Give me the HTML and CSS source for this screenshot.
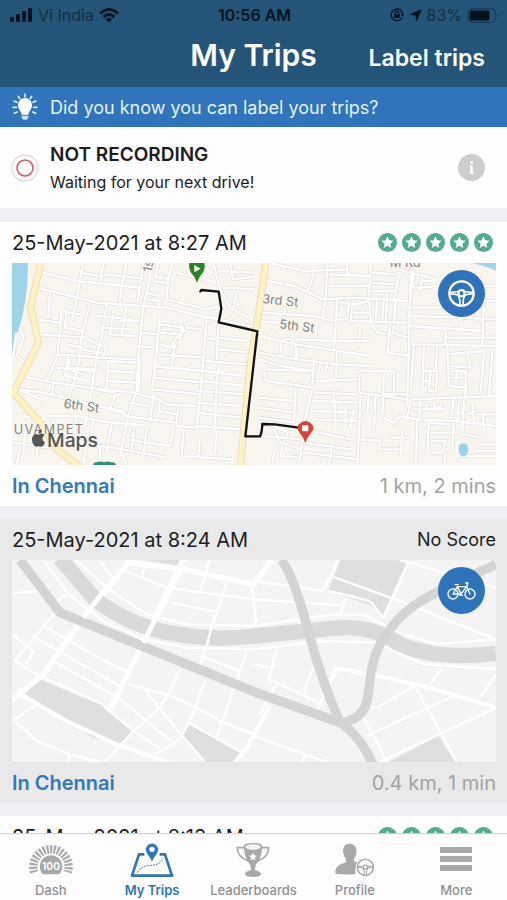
FILE: index.html
```html
<!DOCTYPE html>
<html lang="en">
<head>
<meta charset="utf-8">
<meta name="viewport" content="width=device-width, initial-scale=1">
<title>My Trips</title>
<link rel="stylesheet" href="styles.css">
</head>
<body>
<svg class="defs" aria-hidden="true">
  <symbol id="star" viewBox="0 0 20 20">
    <circle cx="10" cy="10" r="10" fill="#55ab91"/>
    <path d="M10 3.6l1.9 4.1 4.5.5-3.3 3.1.9 4.4-4-2.2-4 2.2.9-4.4-3.3-3.1 4.5-.5z" fill="#fff"/>
  </symbol>
  <symbol id="wheel" viewBox="0 0 80 80">
    <circle cx="40" cy="40" r="36" fill="none" stroke="currentColor" stroke-width="7"/>
    <path d="M6 37Q22 36 31 34M74 37Q58 36 49 34M34 46Q20 40 6 41M46 46Q60 40 74 41M35 74V60Q34 52 30 46M45 74V60Q46 52 50 46" fill="none" stroke="currentColor" stroke-width="5"/>
    <circle cx="40" cy="39" r="9" fill="none" stroke="currentColor" stroke-width="6"/>
  </symbol>
</svg>

<div class="app">
  <header class="top">
    <div class="status">
      <div class="status-left">
        <svg width="23" height="14" viewBox="0 0 23 14" aria-hidden="true"><rect y="9" width="4" height="5" rx="1"/><rect x="6" y="6" width="4" height="8" rx="1"/><rect x="12" y="3" width="4" height="11" rx="1"/><rect x="18" width="4" height="14" rx="1"/></svg>
        <span class="carrier">Vi India</span>
        <svg width="20" height="15" viewBox="0 0 20 15" aria-hidden="true"><g fill="none" stroke="#07131c" stroke-width="2.8"><path d="M1.2 5.4Q10-2.6 18.800 5.400"/><path d="M4.600 8.900Q10 4 15.400 8.900"/></g><path d="M6.800 11.200Q10 8.600 13.200 11.200L10 14.600Z"/></svg>
      </div>
      <span class="clock">10:56 AM</span>
      <div class="status-right">
        <svg width="14" height="14" viewBox="0 0 14 14" aria-hidden="true"><g fill="none" stroke="#07131c" stroke-width="1.300"><path d="M12.200 9.500A5.800 5.800 0 1 1 12.600 5.200"/><path d="M5.300 6.500V5a1.700 1.700 0 0 1 3.400 0v1.500"/></g><rect x="4.300" y="6.200" width="5.400" height="3.800" rx=".6"/><path d="M10.700 5.700h3.300l-1.400 3z"/></svg>
        <svg width="13" height="13" viewBox="0 0 13 13" aria-hidden="true"><path d="M13 0L7.500 13 6.400 6.700 0 5.600Z"/></svg>
        <span class="charge">83%</span>
        <svg width="32" height="15" viewBox="0 0 32 15" aria-hidden="true"><rect x=".7" y=".7" width="27.600" height="13.600" rx="4" fill="none" stroke="#173d57" stroke-width="1.400"/><rect x="2.500" y="2.500" width="20" height="10" rx="2"/><path d="M30 5v5q2-2.500 0-5z" fill="#173d57"/></svg>
      </div>
    </div>
    <div class="nav">
      <h1>My Trips</h1>
      <button class="label-trips" type="button">Label trips</button>
    </div>
  </header>

  <aside class="tip">
    <svg width="26" height="28" viewBox="0 0 78 84" aria-hidden="true">
      <g stroke="#dff2fa" stroke-width="5" stroke-linecap="round"><path d="M39 3v8M19 10l4 7M59 10l-4 7M6 24l9 4M72 24l-9 4M3 43h10M65 43h10M7 61l9-4M71 61l-9-4"/></g>
      <path d="M39 15a21 21 0 0 0-21 21c0 14 10 18 11 29h20c1-11 11-15 11-29a21 21 0 0 0-21-21z" fill="#fff"/>
      <path d="M29 68h20v6q-3 6-6 6h-8q-3 0-6-6z" fill="#c7e6f5"/>
    </svg>
    <span>Did you know you can label your trips?</span>
  </aside>

  <section class="recording">
    <svg width="28" height="28" viewBox="0 0 28 28" aria-hidden="true"><circle cx="14" cy="14" r="13" fill="#fff" stroke="#dcdce4" stroke-width="1.300"/><circle cx="14" cy="14" r="8" fill="none" stroke="#e2585c" stroke-width="1.600"/></svg>
    <div class="recording-text">
      <h2>NOT RECORDING</h2>
      <p>Waiting for your next drive!</p>
    </div>
    <button class="info" type="button" aria-label="Information"><svg width="27" height="27" viewBox="0 0 27 27" aria-hidden="true"><circle cx="13.500" cy="13.500" r="13.500" fill="#cdcdd0"/><circle cx="13.500" cy="8.500" r="1.500" fill="#fff"/><path d="M11.500 11.500h3.300v7h1v1.300h-4.600v-1.300h1v-5.700h-.7z" fill="#fff"/></svg></button>
  </section>

  <main class="trips">
    <article class="trip">
      <div class="trip-head">
        <h2>25-May-2021 at 8:27 AM</h2>
        <div class="stars" role="img" aria-label="5 stars"><svg><use href="#star"/></svg><svg><use href="#star"/></svg><svg><use href="#star"/></svg><svg><use href="#star"/></svg><svg><use href="#star"/></svg></div>
      </div>
      <div class="map">
        <svg class="map-art" viewBox="36 21 1452 606" role="img" aria-label="Route map">
          <defs>
            <g id="streets" fill="none" stroke-linejoin="round">
              <path d="M128 50L232 75 370 90M250 21L242 60 232 125M310 21L300 85M240 50L310 62M380 21L365 90 358 150M318 55L430 68M370 90L425 95M430 21L412 140M122 98L232 125 290 140 430 150 500 155 600 180 762 212M150 110L145 180M232 125L215 195M270 140L245 240 235 330 215 400M185 165L240 175M185 165L172 300 140 375M110 190L180 200M118 235L260 245M200 160L195 215 250 225M200 265L250 275M175 295L300 305 410 310M320 145L305 240 290 300 275 400 255 510M290 180L400 190M300 215L390 220M340 165L330 235 410 240M380 150L365 240M360 195L420 195M430 150L415 300 410 400 385 480 360 600M260 250L320 275 310 300M245 280L300 290M205 295L195 360M170 335L280 345M210 310L205 335 280 340M195 360L265 375M215 345L250 355"/>
              <path d="M320 315L410 320M325 345L415 350M325 375L410 380M325 315L320 400M60 360L160 380 270 395 400 410M160 380L155 420M190 395L180 420M215 400L205 425M50 400L130 410 290 450 370 465M130 410L55 400 125 430M290 400L345 410M345 415L330 460 380 475M455 21L448 75 430 150M475 21L465 60 510 70M460 75L505 82M440 110L475 120M440 130L480 135 475 160M505 60L500 130 600 155M515 21L505 75M530 50L645 78M640 21L660 100M660 100L690 155 762 195M690 21L700 70 762 62M660 45L762 50M670 95L762 100M700 155L710 110M610 160L665 150M610 185L665 185M480 175L470 290 455 410M480 205L550 215 545 235 480 230M410 270L465 275M420 230L475 235M480 265L515 275 525 250 560 220M480 295L610 305M545 195L540 260M525 265L515 335M620 190L610 310 600 420 590 520M655 205L650 310M570 190L560 215 605 220M610 245L650 250M655 245L740 255M655 280L762 290M615 315L740 325M610 345L735 360M460 330L610 345M460 365L610 380M460 400L600 415M420 305L415 410M660 320L650 370 645 520"/>
              <path d="M600 375L740 390M590 405L740 415M590 440L725 450M590 470L720 485M395 410L480 430 500 445 590 450M385 440L450 450M460 420L450 500M370 480L530 500M480 430L475 465 530 475M535 450L530 510 590 515M590 510L730 520M520 515L510 570 380 550M130 480L125 520M130 480L230 480 300 495 440 510M60 480L140 490M60 525L130 535M40 560L145 575M75 525L70 600M115 540L110 600M160 490L150 560M230 480L220 560M280 495L270 560M335 500L320 590M220 560L340 575 500 605M360 580L380 627M440 515L430 600M405 500L395 580M255 585L250 627M190 545L260 560M60 575L50 627M300 570L300 627M550 525L545 600M545 600L700 610M600 545L595 600M650 530L645 590M700 600L695 627M60 215L70 245 50 300M50 300L80 325M50 230L40 300"/>
              <g transform="translate(762 0)">
                <path d="M50 21L150 45 280 40M40 75L120 90 210 130 300 125 460 135M180 50L160 110M220 21L215 130 205 185M225 55L345 60M225 90L345 90M280 21V60M350 21L345 120 350 200M350 50L425 55M350 80L425 85M435 60L420 130M350 105L425 105M470 21L475 60 465 180M430 40L550 70M480 45L475 90 505 100M505 65L500 95 550 90M505 75L545 75M20 170L180 180 240 195M95 145L85 210M15 195L180 210M250 130L240 280M255 140H285L280 190H250M290 150L345 135M290 170H345M290 195L460 200M295 140L290 195M370 130L365 190M390 120L385 190M400 110L395 200M425 130L420 195M350 200L370 230 400 235M410 200L400 290 465 300M420 205L415 230 460 245M470 60L460 450M460 180L620 185 726 190M460 210L690 225M470 265L726 270M575 220V265M575 245L726 245M690 100L685 270M690 135H726M620 185V205M460 155H560M15 240L125 265 350 300M60 220L45 245M15 230L45 250M130 250L250 255 350 255M320 215L315 245M190 195L185 240M80 260Q105 235 125 265V310L15 290M80 265V300M15 310L80 330 180 345M130 310L250 325 350 330M130 275V310M250 285L245 375M30 340L35 375 180 395M35 340L180 345M180 310L175 385M200 320L195 345M220 325L215 345M185 375L310 370M185 410L310 415M175 400L145 520M125 395L120 500M15 425L120 435M15 455L120 470M15 485L120 500"/>
                <path d="M310 350Q320 340 345 345H420V410M315 360V410L460 430M390 345L385 480M345 410L340 465M320 415L310 627M180 435L310 440M180 465L310 470M180 490L310 495M240 415L245 510M275 455V510M300 455L290 510M390 415H460M365 415L360 520M385 485L420 500 440 480 490 490 600 495 726 510M470 430L600 425 726 420M470 460H550M470 430L460 490M500 430L495 490M510 270L505 400M550 270L545 345M480 270L470 390M510 345H550L545 405H525L530 345M510 375H530M580 270L585 390 635 395M580 295L690 285M590 330L650 335 640 290M610 340L605 385M590 365H630M630 395L635 430M600 345H635V420M690 290L680 410M715 280L705 420 726 420M520 440L515 460H575M540 440V455H560V440M600 425L590 490M615 430L610 500M630 430L625 530M655 440L660 500M690 470L685 510M640 475L670 465M670 475H726M630 470H600M490 490L485 627M525 490L520 590M445 520L440 600M410 545H470M380 545L375 580H450M320 550L380 555M520 500L590 505M530 530H610M530 555H575L565 590H530M600 500L595 580M630 535L680 545M690 500V530M670 565H726M670 585H726M610 600H726M575 590L570 627M150 520L290 550M150 560L290 580M235 560L225 627M155 590L310 610M145 560L135 627M60 520L80 560 145 580M25 540L140 550M85 570L80 600 140 605M60 590L55 627M100 530L95 550M25 500L110 530M650 90H726"/>
              </g>
            </g>
          </defs>
          <rect x="36" y="21" width="1452" height="606" fill="#f8f5ee"/>
          <path d="M36 21H84L82 80Q78 130 65 190Q50 240 36 290Z" fill="#9fd3e9"/>
          <path d="M1416 21h72v23q-30-13-72-23z" fill="#9fd3e9"/>
          <use href="#streets" stroke="#e2dfda" stroke-width="11"/>
          <use href="#streets" stroke="#fff" stroke-width="7"/>
          <g fill="none" stroke-linejoin="round">
            <path d="M125 10L110 75 92 150 115 260 40 410 120 500 170 580 250 640M799 10L778 160 750 330 720 640" stroke="#f0deb2" stroke-width="22"/>
            <path d="M125 10L110 75 92 150 115 260 40 410 120 500 170 580 250 640M799 10L778 160 750 330 720 640" stroke="#fff3c6" stroke-width="16"/>
          </g>
          <path d="M1378 568q10-12 24-1l3 20q-8 18-22 12-11-12-5-31z" fill="#93d5ee"/>
          <path d="M280 627q0-10 12-8 10-5 20 0 10-5 20 0 15-2 15 8z" fill="#24956f"/>
          <g class="map-label">
            <text x="786" y="141" transform="rotate(6 786 141)">3rd St</text>
            <text x="837" y="217" transform="rotate(7 837 217)">5th St</text>
            <text x="190" y="455" transform="rotate(8 190 455)">6th St</text>
            <text x="455" y="50" transform="rotate(-80 455 50)">1st</text>
            <text x="1170" y="32">M Rd</text>
            <text class="district" x="41" y="535">UVAMPET</text>
          </g>
          <g fill="#555553"><path d="M116 536c-8-6-20 0-20 14 0 12 8 25 15 22q5-2 10 0c7 2 12-6 14-13-10-5-9-17-1-21-5-6-12-5-18-2z"/><path d="M115 533c0-7 4-12 11-13 0 8-4 13-11 13z"/></g>
          <text class="maps-brand" x="141" y="572">Maps</text>
          <path d="M601 106L604 102 656 107 664 158 656 199 772 226 736 541 780 541Q786 530 787 504L825 505 895 515" fill="none" stroke="#111" stroke-width="7" stroke-linejoin="round" stroke-linecap="round"/>
          <path d="M591 80Q585 62 574 51Q565 38 568 21H613Q617 38 607 52Q596 65 591 80Z" fill="#2a8420"/><path d="M583 27l19 11-19 11z" fill="#fff"/>
          <path d="M916 561Q910 543 899 531Q884 512 902 500Q916 490 931 500Q948 513 933 531Q921 544 916 561Z" fill="#d94237"/><rect x="906" y="508" width="19" height="18" rx="3" fill="#fff"/>
        </svg>
        <span class="mode"><svg width="27" height="27" aria-hidden="true"><use href="#wheel"/></svg></span>
      </div>
      <div class="trip-foot"><a href="#trip-827">In Chennai</a><span>1 km, 2 mins</span></div>
    </article>

    <article class="trip unscored">
      <div class="trip-head">
        <h2>25-May-2021 at 8:24 AM</h2>
        <span class="no-score">No Score</span>
      </div>
      <div class="map">
        <svg class="map-art" viewBox="36 27 1452 606" role="img" aria-label="Map placeholder">
          <rect x="36" y="27" width="1452" height="606" fill="#f4f4f4"/>
          <g fill="#dfdfdf">
            <path d="M75 428L118 385 310 465 400 542 360 578 280 560Z"/>
            <path d="M545 553L568 517 722 603 700 633H615Z"/>
            <path d="M1022 27H1195L1218 38 1150 190 1105 160 985 120Z"/>
            <path d="M1165 633L1315 555 1365 633Z"/>
            <path d="M430 27H550L545 45Z"/>
          </g>
          <g fill="none" stroke="#fff">
            <path stroke-width="7" d="M222 20L320 110 440 190 560 220 762 225 1000 190 1090 192 1200 245 1310 280 1488 265M130 27L205 130 310 210 430 265 560 290 762 295 960 270 1130 275 1270 340 1488 354"/>
            <path stroke-width="16" d="M30 450L130 370 250 200 385 35 550 55 762 100 815 27M552 20L430 275 330 475"/>
            <path stroke-width="12" d="M60 430L210 515 350 580 520 640M950 480L1010 352 1130 375 1270 405 1488 470M810 465L740 590 700 640"/>
            <path stroke-width="7" d="M36 127L120 120M200 130L165 155M160 190L45 330 120 375 310 460M130 225L350 350 380 358M105 260L360 405M170 335L355 440 440 510 520 575M310 465L400 540 490 600M36 250L100 300 80 340M36 510L110 460M36 500L110 570 210 610 300 633M210 610L205 633M385 400L505 432 570 460 670 515 755 548M430 410L545 553 615 633M540 355L505 432 470 480 400 540 315 633M460 610L520 580 545 553 570 510 615 390M565 515L722 603M300 30L340 85M375 60L500 110 762 145M435 40L425 85M510 155L645 182M630 27L600 120M680 95L640 220 600 345M600 315L720 360M740 300L700 418 650 558M755 100L770 225M762 145L1030 163M762 90L970 120 1015 27M1000 78L1180 143 1488 265M985 120Q1100 145 1115 155L1150 200M1225 35L1150 200M1035 145L1020 190M1200 27L1488 110M762 340L805 350M830 295L805 385 960 455M940 350L910 425M825 405L780 490M762 555L980 633M920 612L905 633M1080 480L1165 640M1100 470H1130L1245 405 1370 633M1100 555L1360 435M1140 633L1488 470M1325 355L1290 400M1488 370L1440 440"/>
          </g>
          <g fill="none" stroke="#dadada" stroke-linejoin="round">
            <path stroke-width="46" d="M180 21L285 145Q390 225 520 248Q650 270 762 255L1000 232Q1110 220 1190 275Q1300 330 1488 307"/>
            <path stroke-width="28" stroke="#d4d4d4" d="M60 27L180 185 762 422 1023 516Q1085 560 1118 640M844 27Q880 70 925 240Q965 390 1020 515M1023 516C1160 490 1060 370 1170 235C1220 160 1300 125 1488 40"/>
          </g>
          <g fill="none" stroke="#fff" stroke-width="15"><path d="M325 102L250 200M545 50L430 275"/><path stroke-width="8" d="M645 190L620 285"/></g>
        </svg>
        <span class="mode"><svg width="29" height="18" viewBox="0 0 87 54" fill="none" stroke="#fff" stroke-width="4" stroke-linecap="round" stroke-linejoin="round" aria-hidden="true"><circle cx="18" cy="36" r="15"/><circle cx="69" cy="36" r="15"/><path d="M18 36L31 14H59L42 36H18M31 14L42 36M24 8H34M56 3H63L59 14 69 36M39 40H46"/></svg></span>
      </div>
      <div class="trip-foot"><a href="#trip-824">In Chennai</a><span>0.4 km, 1 min</span></div>
    </article>

    <article class="trip">
      <div class="trip-head">
        <h2>25-May-2021 at 8:13 AM</h2>
        <div class="stars" role="img" aria-label="5 stars"><svg><use href="#star"/></svg><svg><use href="#star"/></svg><svg><use href="#star"/></svg><svg><use href="#star"/></svg><svg><use href="#star"/></svg></div>
      </div>
    </article>
  </main>

  <nav class="tabs" aria-label="Main">
    <a href="#dash"><svg width="44" height="34" viewBox="0 0 132 102" aria-hidden="true"><path d="M15.500 91A53 53 0 1 1 116.500 91" fill="none" stroke="#a9a9ab" stroke-width="25" pathLength="37" stroke-dasharray="1.200 .79"/><path d="M38 93A34 34 0 1 1 94 93Q92 97 86 97H46Q40 97 38 93Z" fill="#a9a9ab"/><text class="score" x="66" y="83">100</text></svg>Dash</a>
    <a href="#trips" class="active" aria-current="page"><svg width="44" height="36" viewBox="0 0 132 108" fill="none" stroke="#2f75b8" aria-hidden="true"><path d="M43 37H27L6 101H126L105 37H89" stroke-width="8" stroke-linejoin="round"/><path d="M22 92Q35 70 62 70T100 49" stroke-width="3" stroke-dasharray="6 3"/><path d="M66 59Q61 46 52 36Q41 18 57 7Q66 2 75 7Q91 18 80 36Q71 46 66 59Z" fill="#2f75b8" stroke="none"/><circle cx="66" cy="22" r="8" fill="#fff" stroke="none"/></svg>My Trips</a>
    <a href="#leaderboards"><svg width="36" height="36" viewBox="0 0 108 108" aria-hidden="true"><g fill="none" stroke="#a9a9ab" stroke-width="5"><path d="M29 17H7Q7 45 40 57M79 17H101Q101 45 68 57"/></g><path d="M26 12Q28 3 54 3Q80 3 82 12Q80 46 68 60Q59 70 60 85Q77 88 78 96Q76 105 54 105Q32 105 30 96Q31 88 48 85Q49 70 40 60Q28 46 26 12Z" fill="#a9a9ab"/><ellipse cx="54" cy="15" rx="23" ry="8" fill="#f4f4f4"/><path d="M54 32l3.500 8 8.500 1-6 6 1.500 8-7.500-4-7.500 4 1.500-8-6-6 8.500-1z" fill="#fff"/></svg>Leaderboards</a>
    <a href="#profile"><svg width="40" height="36" viewBox="0 0 120 108" fill="#a9a9ab" aria-hidden="true"><path d="M44 5C28 5 22 18 25 34C27 44 31 48 33 51V60C18 68 0 69 1 95Q30 99 62 96Q57 75 74 63L57 58V51C60 47 63 42 64 34C67 18 60 5 44 5Z"/><circle cx="91" cy="76" r="29" fill="#fdfdfd"/><svg class="small-wheel" x="64" y="49" width="54" height="54"><use href="#wheel"/></svg></svg>Profile</a>
    <a href="#more"><svg width="34" height="34" viewBox="0 0 34 34" fill="#a9a9ab" aria-hidden="true"><path d="M1 5h32v6H1zM1 14h32v6H1zM1 23h32v6H1z"/></svg>More</a>
  </nav>
</div>
</body>
</html>
```
FILE: styles.css
```css
* {
  box-sizing: border-box;
}

body {
  margin: 0;
  font-family: Inter, "Liberation Sans", sans-serif;
  color: #1c1c1e;
  background: #efeff4;
}

h1, h2, p {
  margin: 0;
}

button {
  border: 0;
  padding: 0;
  background: none;
  font: inherit;
  color: inherit;
}

a {
  text-decoration: none;
}

svg {
  flex: none;
}

.defs {
  position: absolute;
  width: 0;
  height: 0;
}

.app {
  display: flex;
  flex-direction: column;
  height: 100vh;
}

.top {
  flex: none;
  background: #245478;
}

.status {
  display: grid;
  grid-template-columns: 1fr auto 1fr;
  align-items: center;
  height: 30px;
  padding: 0 8px 0 10px;
  font-size: 16px;
  color: #07131c;
  fill: #07131c;
}

.status-left,
.status-right {
  display: flex;
  align-items: center;
  gap: 5px;
}

.status-right {
  justify-content: flex-end;
}

.carrier,
.charge {
  color: #132f42;
}

.clock {
  font-weight: 600;
}

.nav {
  display: grid;
  grid-template-columns: 1fr auto 1fr;
  align-items: baseline;
  height: 57px;
  padding: 6px 22px 0;
  color: #fff;
}

.nav h1 {
  grid-column: 2;
  font-size: 30px;
  line-height: 38px;
  font-weight: 600;
}

.label-trips {
  justify-self: end;
  font-size: 23px;
  font-weight: 600;
}

.tip {
  display: flex;
  flex: none;
  align-items: center;
  gap: 12px;
  height: 40px;
  padding: 0 12px;
  background: #3075bb;
  color: #e6f2fb;
  font-size: 18px;
}

.recording {
  display: flex;
  flex: none;
  align-items: center;
  gap: 11px;
  height: 81px;
  padding: 0 22px 0 11px;
  background: #fdfdfe;
}

.recording-text {
  flex: 1;
}

.recording h2 {
  font-size: 19px;
  line-height: 28px;
  font-weight: 600;
}

.recording p {
  font-size: 16px;
  line-height: 26px;
}

.info {
  display: flex;
}

.trips {
  display: flex;
  flex: 1;
  flex-direction: column;
  gap: 13px;
  min-height: 0;
  padding-top: 14px;
  overflow: hidden;
}

.trip {
  flex: none;
  padding: 0 11px 0 12px;
  background: #fefefe;
}

.unscored {
  background: #e9e9e9;
}

.trip-head,
.trip-foot {
  display: flex;
  align-items: center;
  justify-content: space-between;
  height: 41px;
  font-size: 20px;
}

.trip-foot {
  color: #a3a3a5;
}

.trip-head h2 {
  font-size: 20px;
  font-weight: 400;
}

.trip-foot a {
  font-weight: 600;
  color: #3478b9;
}

.no-score {
  font-size: 18px;
}

.stars {
  display: flex;
  gap: 5px;
  padding-right: 3px;
}

.stars svg {
  width: 19px;
  height: 19px;
}

.map {
  position: relative;
}

.map-art {
  display: block;
  width: 100%;
  height: auto;
}

.map-label {
  font-size: 38px;
  fill: #858583;
  stroke: #f9f6f0;
  stroke-width: 6px;
  paint-order: stroke;
}

.district {
  letter-spacing: 4px;
}

.maps-brand {
  font-size: 58px;
  font-weight: 500;
  fill: #555553;
}

.mode {
  position: absolute;
  top: 7px;
  right: 11px;
  display: flex;
  align-items: center;
  justify-content: center;
  width: 47px;
  height: 47px;
  border-radius: 50%;
  background: #2f74bb;
  color: #fff;
}

.tabs {
  display: grid;
  flex: none;
  grid-template-columns: repeat(5, 1fr);
  height: 67px;
  border-top: 1px solid #cfcfd1;
  background: #fdfdfd;
}

.tabs a {
  display: flex;
  flex-direction: column;
  align-items: center;
  justify-content: space-between;
  padding: 8px 0 2px;
  font-size: 13px;
  line-height: 16px;
  font-weight: 500;
  color: #8f8f92;
}

.tabs .active {
  font-weight: 600;
  color: #2f75b8;
}

.score {
  font-size: 31px;
  font-weight: 600;
  text-anchor: middle;
  fill: #fff;
}

.small-wheel {
  color: #a9a9ab;
}
```
